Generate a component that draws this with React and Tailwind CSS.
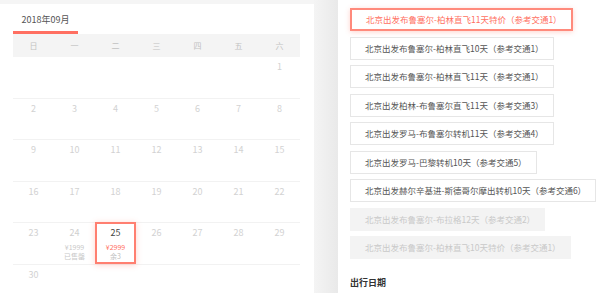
import React from 'react';

const weekdays = ['日', '一', '二', '三', '四', '五', '六'];

// September 2018 starts on Saturday
const weeks = [
  [null, null, null, null, null, null, 1],
  [2, 3, 4, 5, 6, 7, 8],
  [9, 10, 11, 12, 13, 14, 15],
  [16, 17, 18, 19, 20, 21, 22],
  [23, 24, 25, 26, 27, 28, 29],
  [30, null, null, null, null, null, null],
];

const routes = [
  { name: '北京出发布鲁塞尔-柏林直飞11天特价（参考交通1）', state: 'active' },
  { name: '北京出发布鲁塞尔-柏林直飞10天（参考交通1）', state: 'normal' },
  { name: '北京出发布鲁塞尔-柏林直飞11天（参考交通1）', state: 'normal' },
  { name: '北京出发柏林-布鲁塞尔直飞11天（参考交通3）', state: 'normal' },
  { name: '北京出发罗马-布鲁塞尔转机11天（参考交通4）', state: 'normal' },
  { name: '北京出发罗马-巴黎转机10天（参考交通5）', state: 'normal' },
  { name: '北京出发赫尔辛基进-斯德哥尔摩出转机10天（参考交通6）', state: 'normal' },
  { name: '北京出发布鲁塞尔-布拉格12天（参考交通2）', state: 'disabled' },
  { name: '北京出发布鲁塞尔-柏林直飞10天特价（参考交通1）', state: 'disabled' },
];

function DayCell({ day }) {
  if (day === 24) {
    return (
      <div className="flex flex-col items-center pt-[5px]">
        <span className="text-[9px] leading-[10px] text-[#cfcfcf]">24</span>
        <span className="mt-[5px] text-[7px] leading-[9px] text-[#c8c8c8]">¥1999</span>
        <span className="text-[7px] leading-[9px] text-[#c8c8c8]">已售罄</span>
      </div>
    );
  }
  if (day === 25) {
    return (
      <div className="relative z-10 -mt-px flex h-[calc(100%+1px)] flex-col items-center border-2 border-[#ff7f70] bg-white pt-[4px] shadow-[0_1px_6px_rgba(255,110,90,0.3)]">
        <span className="text-[9px] leading-[10px] text-[#444]">25</span>
        <span className="mt-[5px] text-[7px] leading-[9px] text-[#ff6f5f]">¥2999</span>
        <span className="text-[7px] leading-[9px] text-[#c0c0c0]">余3</span>
      </div>
    );
  }
  return (
    <div className="flex justify-center pt-[5px]">
      <span className="text-[9px] leading-[10px] text-[#d2d2d2]">{day}</span>
    </div>
  );
}

export default function App() {
  return (
    <div className="flex h-[293px] w-[600px] overflow-hidden bg-[#f5f5f5] font-['Noto_Sans_CJK_SC','Noto_Sans',sans-serif]">
      {/* Calendar */}
      <div className="mt-[4px] w-[314px] shrink-0 bg-white pl-[13px] pr-[14px]">
        <div className="h-[30px] pt-[10px]">
          <div className="h-full w-[65px] border-b-[3px] border-[#ff6f61] text-center text-[9px] leading-[12px] text-[#555]">
            2018年09月
          </div>
        </div>
        <div className="grid h-[23px] grid-cols-7 items-center bg-[#f4f4f4] text-center text-[8px] text-[#c2c2c2]">
          {weekdays.map(w => (
            <span key={w}>{w}</span>
          ))}
        </div>
        {weeks.map((week, i) => (
          <div key={i} className="grid h-[41.5px] grid-cols-7 border-b border-[#f2f2f2]">
            {week.map((day, j) => (
              <div key={j}>{day && <DayCell day={day} />}</div>
            ))}
          </div>
        ))}
      </div>

      {/* Gutter */}
      <div className="w-[24px] shrink-0 bg-gradient-to-r from-[#f4f4f4] to-[#e9e9e9]"></div>

      {/* Routes */}
      <div className="flex min-w-0 flex-1 flex-col items-start bg-white pl-[12px] pt-[8px]">
        {routes.map(r => (
          <div
            key={r.name}
            className={`mb-[5.5px] flex h-[23px] items-center whitespace-nowrap text-[8.5px] ${
              r.state === 'active'
                ? 'border-2 border-[#ff8a7c] pl-[14px] pr-[9px] text-[#ff6f5f] shadow-[0_1px_5px_rgba(255,110,90,0.3)]'
                : r.state === 'disabled'
                ? 'bg-[#f3f3f3] pl-[15px] pr-[10px] text-[#c9c9c9]'
                : 'border border-[#e6e6e6] pl-[14px] pr-[9px] text-[#555]'
            }`}
          >
            {r.name}
          </div>
        ))}
        <div className="mt-[11px] text-[9px] font-bold text-[#333]">出行日期</div>
      </div>
    </div>
  );
}
